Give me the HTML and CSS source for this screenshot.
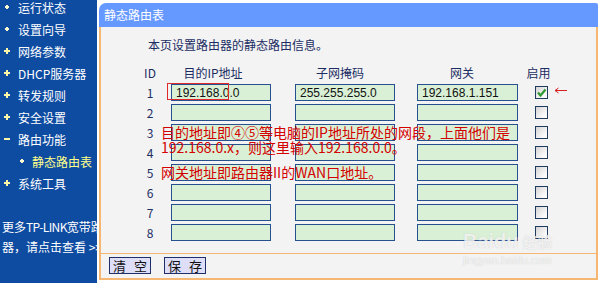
FILE: index.html
```html
<!DOCTYPE html>
<html lang="zh-CN">
<head>
<meta charset="utf-8">
<title>静态路由表</title>
<link rel="stylesheet" href="styles.css">
</head>
<body>
<div class="page">
  <nav class="sidebar">
    <ul class="menu">
      <li class="item dot">运行状态</li>
      <li class="item dot">设置向导</li>
      <li class="item plus">网络参数</li>
      <li class="item plus">DHCP服务器</li>
      <li class="item plus">转发规则</li>
      <li class="item plus">安全设置</li>
      <li class="item minus">路由功能</li>
      <li class="item sub dot active">静态路由表</li>
      <li class="item plus">系统工具</li>
    </ul>
    <div class="more">
      <div class="more-line">更多<span class="narrow">TP-LINK</span>宽带路由</div>
      <div class="more-line">器，请点击查看 &gt;&gt;</div>
    </div>
  </nav>

  <section class="panel">
    <header class="panel-title">静态路由表</header>
    <div class="panel-body">
      <p class="desc">本页设置路由器的静态路由信息。</p>
      <div class="grid">
        <div class="th id">ID</div>
        <div class="th ip">目的IP地址</div>
        <div class="th mask">子网掩码</div>
        <div class="th gw">网关</div>
        <div class="th en">启用</div>

        <div class="id">1</div>
        <input class="field" type="text" value="192.168.0.0">
        <input class="field" type="text" value="255.255.255.0">
        <input class="field wide" type="text" value="192.168.1.151">
        <span class="check checked"><svg viewBox="0 0 11 11" width="11" height="11"><path d="M2 5.5 L4.5 8.5 L9.5 2.5" fill="none" stroke="#2f9a2f" stroke-width="2.2"/></svg></span>

        <div class="id">2</div>
        <input class="field" type="text" value="">
        <input class="field" type="text" value="">
        <input class="field wide" type="text" value="">
        <span class="check"></span>

        <div class="id">3</div>
        <input class="field" type="text" value="">
        <input class="field" type="text" value="">
        <input class="field wide" type="text" value="">
        <span class="check"></span>

        <div class="id">4</div>
        <input class="field" type="text" value="">
        <input class="field" type="text" value="">
        <input class="field wide" type="text" value="">
        <span class="check"></span>

        <div class="id">5</div>
        <input class="field" type="text" value="">
        <input class="field" type="text" value="">
        <input class="field wide" type="text" value="">
        <span class="check"></span>

        <div class="id">6</div>
        <input class="field" type="text" value="">
        <input class="field" type="text" value="">
        <input class="field wide" type="text" value="">
        <span class="check"></span>

        <div class="id">7</div>
        <input class="field" type="text" value="">
        <input class="field" type="text" value="">
        <input class="field wide" type="text" value="">
        <span class="check"></span>

        <div class="id">8</div>
        <input class="field" type="text" value="">
        <input class="field" type="text" value="">
        <input class="field wide" type="text" value="">
        <span class="check"></span>
      </div>
    </div>
    <div class="actions">
      <button class="btn" type="button">清 空</button>
      <button class="btn" type="button">保 存</button>
    </div>

    <div class="mark-box"></div>
    <svg class="mark-arrow" viewBox="0 0 14 7" width="14" height="7"><path d="M1 3.5 H13 M1 3.5 L4.5 1 M1 3.5 L4.5 6" stroke="#d42020" stroke-width="1" fill="none"/></svg>
    <div class="note">
      <div class="note-line">目的地址即④⑤等电脑的IP地址所处的网段，上面他们是</div>
      <div class="note-line">192.168.0.x，则这里输入192.168.0.0。</div>
      <div class="note-line gap">网关地址即路由器II的WAN口地址。</div>
    </div>
    <div class="watermark">
      <div class="wm-logo">Baidu<span class="wm-cn">经验</span></div>
      <div class="wm-url">jingyan.baidu.com</div>
    </div>
  </section>
</div>
</body>
</html>
```

FILE: styles.css
```css
* { box-sizing: border-box; }

body {
  margin: 0;
  width: 604px;
  height: 283px;
  overflow: hidden;
  background: #ffffff;
  font-family: "Noto Sans CJK SC", sans-serif;
}

.page {
  display: flex;
  height: 283px;
}

/* ---------- sidebar ---------- */
.sidebar {
  width: 97px;
  flex: none;
  background: #0e4ca2;
  color: #ffffff;
  overflow: hidden;
  font-size: 12px;
}

.menu {
  list-style: none;
  margin: -4px 0 0;
  padding: 0;
}

.item {
  display: flex;
  align-items: center;
  height: 22px;
  white-space: nowrap;
}

.item::before {
  content: "";
  flex: none;
  width: 6px;
  height: 6px;
  margin-left: 4px;
  margin-right: 8px;
}

.item.plus::before {
  background:
    linear-gradient(#fff7a8, #fff7a8) center / 6px 2px no-repeat,
    linear-gradient(#fff7a8, #fff7a8) center / 2px 6px no-repeat;
}

.item.minus::before {
  background: linear-gradient(#fff7a8, #fff7a8) center / 6px 2px no-repeat;
}

.item.dot::before {
  background: radial-gradient(circle, #fffbd0 0 1.6px, transparent 2px) center / 6px 6px no-repeat;
}

.item.sub::before {
  margin-left: 19px;
  margin-right: 7px;
}

.item.active {
  color: #ffff8a;
}

.more {
  margin-top: 23px;
  line-height: 20px;
  font-size: 12px;
}

.more-line {
  white-space: nowrap;
  padding-left: 2px;
}

.narrow {
  letter-spacing: -0.6px;
}

/* ---------- panel ---------- */
.panel {
  position: relative;
  width: 499px;
  margin: 3px 0 0 2px;
  height: 277px;
  flex: none;
}

.panel-title {
  height: 24px;
  line-height: 24px;
  background: #6699ff;
  color: #ffffff;
  font-size: 12px;
  padding-left: 5px;
  border-radius: 7px 2px 0 0;
}

.panel-body {
  background: #f3f3f3;
  border-left: 2px solid #f6b772;
  border-right: 2px solid #f6b772;
  padding: 10px 0 12px;
}

.desc {
  margin: 0 0 11px 47px;
  font-size: 12px;
  line-height: 16px;
  color: #1b2d63;
}

.grid {
  display: grid;
  margin-left: 32px;
  grid-template-columns: 38px 124px 122px 118px 13px;
  grid-template-rows: 17px repeat(8, 17px);
  row-gap: 3px;
  align-items: center;
}

.th {
  font-size: 12px;
  line-height: 17px;
  color: #1b2d63;
  text-align: center;
}

.th.ip { width: 100px; padding-right: 16px; }
.th.mask { width: 100px; padding-right: 10px; }
.th.gw { width: 101px; padding-right: 11px; }
.th.en { width: 33px; margin-left: -13px; }

.id {
  font-size: 12px;
  line-height: 17px;
  color: #1b2d63;
  text-align: center;
  padding-right: 4px;
}

.field {
  width: 100px;
  height: 17px;
  margin: 0;
  padding: 0 0 0 4px;
  border: 1px solid #27508e;
  background: #d9f0d6;
  font-family: "Liberation Sans", sans-serif;
  font-size: 12px;
  color: #111111;
  outline: none;
}

.field.wide { width: 101px; }

.check {
  display: flex;
  align-items: center;
  justify-content: center;
  width: 13px;
  height: 13px;
  border: 1px solid #1f3b5f;
  background: linear-gradient(135deg, #d4d4d4, #f7f7f7 70%, #ffffff);
}

/* ---------- actions ---------- */
.actions {
  display: flex;
  gap: 13px;
  background: #f3f3f3;
  border: 2px solid #f6b772;
  border-top: 1px solid #f6b772;
  padding: 3px 0 4px 8px;
}

.btn {
  width: 42px;
  height: 17px;
  margin: 0;
  padding: 0;
  border: 1px solid #1f2f6a;
  background: #dedef8;
  font-family: "Noto Sans CJK SC", sans-serif;
  font-size: 13px;
  line-height: 15px;
  word-spacing: 5px;
  color: #111111;
}

/* ---------- annotations (overlay) ---------- */
.mark-box {
  position: absolute;
  left: 68px;
  top: 80px;
  width: 62px;
  height: 17px;
  border: 1px solid #e02a2a;
}

.mark-arrow {
  position: absolute;
  left: 455px;
  top: 84px;
}

.note {
  position: absolute;
  left: 62px;
  top: 122px;
  color: #d40000;
  font-size: 14px;
  line-height: 15px;
  white-space: nowrap;
}

.note-line.gap {
  margin-top: 10px;
}

.watermark {
  position: absolute;
  left: 364px;
  top: 226px;
  color: rgba(255, 255, 255, 0.75);
  text-shadow: 0 0 1px rgba(140, 140, 140, 0.45);
  pointer-events: none;
}

.wm-logo {
  font-family: "Liberation Sans", sans-serif;
  font-weight: bold;
  font-size: 20px;
  line-height: 24px;
}

.wm-cn {
  font-family: "Noto Sans CJK SC", sans-serif;
  font-size: 15px;
  margin-left: 4px;
}

.wm-url {
  font-family: "Liberation Sans", sans-serif;
  font-size: 11px;
  line-height: 12px;
}
```
